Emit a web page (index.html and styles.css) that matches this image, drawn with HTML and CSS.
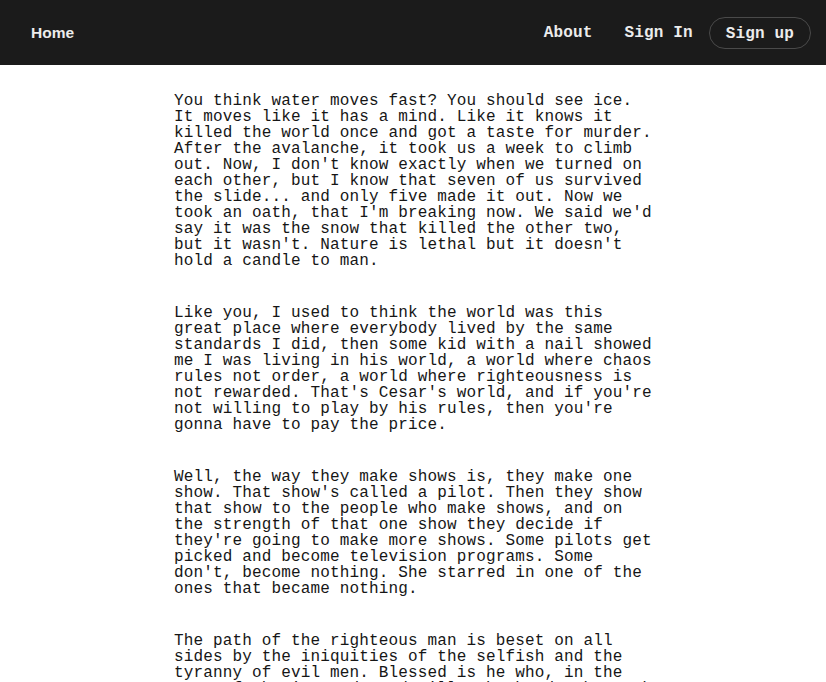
FILE: index.html
```html
<!DOCTYPE html>
<html lang="en">
<head>
<meta charset="utf-8">
<title>Stories</title>
<link rel="stylesheet" href="styles.css">
</head>
<body>
<header class="navbar">
  <a class="nav-home" href="#">Home</a>
  <nav class="nav-right">
    <a class="nav-link" href="#">About</a>
    <a class="nav-link" href="#">Sign In</a>
    <a class="nav-button" href="#">Sign up</a>
  </nav>
</header>
<main class="content">
  <article class="article">
    <p>You think water moves fast? You should see ice. It moves like it has a mind. Like it knows it killed the world once and got a taste for murder. After the avalanche, it took us a week to climb out. Now, I don't know exactly when we turned on each other, but I know that seven of us survived the slide... and only five made it out. Now we took an oath, that I'm breaking now. We said we'd say it was the snow that killed the other two, but it wasn't. Nature is lethal but it doesn't hold a candle to man.</p>
    <p>Like you, I used to think the world was this great place where everybody lived by the same standards I did, then some kid with a nail showed me I was living in his world, a world where chaos rules not order, a world where righteousness is not rewarded. That's Cesar's world, and if you're not willing to play by his rules, then you're gonna have to pay the price.</p>
    <p>Well, the way they make shows is, they make one show. That show's called a pilot. Then they show that show to the people who make shows, and on the strength of that one show they decide if they're going to make more shows. Some pilots get picked and become television programs. Some don't, become nothing. She starred in one of the ones that became nothing.</p>
    <p>The path of the righteous man is beset on all sides by the iniquities of the selfish and the tyranny of evil men. Blessed is he who, in the name of charity and good will, shepherds the weak through the valley of darkness, for he is truly his brother's keeper and the finder of lost children.</p>
  </article>
</main>
</body>
</html>
```

FILE: styles.css
```css
* {
  box-sizing: border-box;
}

html, body {
  margin: 0;
  padding: 0;
  background: #ffffff;
}

body {
  font-family: "Liberation Mono", "DejaVu Sans Mono", monospace;
  color: #161616;
}

a {
  text-decoration: none;
  color: inherit;
}

.navbar {
  height: 65px;
  background: #1b1b1b;
  color: #ececec;
  display: flex;
  align-items: center;
  justify-content: space-between;
  padding: 0 15px 0 16px;
}

.nav-home {
  font-family: "Liberation Sans", Arial, sans-serif;
  font-size: 15.5px;
  font-weight: 700;
  padding: 0 16px 0 15px;
}

.nav-right {
  display: flex;
  align-items: center;
}

.nav-link,
.nav-button {
  font-family: "Liberation Mono", "DejaVu Sans Mono", monospace;
  font-weight: 700;
  font-size: 16px;
  letter-spacing: 0.15px;
  line-height: 16px;
  padding: 0 16px;
}

.nav-button {
  border: 1px solid #4a4a4a;
  border-radius: 999px;
  padding: 8px 16px 8px 16px;
  height: 32px;
  margin-top: 1px;
}

.content {
  display: flex;
  justify-content: center;
  padding-top: 28px;
}

.article {
  width: 478px;
  font-size: 16px;
  line-height: 16px;
  letter-spacing: 0.15px;
}

.article p {
  margin: 0 0 36px 0;
}
```
